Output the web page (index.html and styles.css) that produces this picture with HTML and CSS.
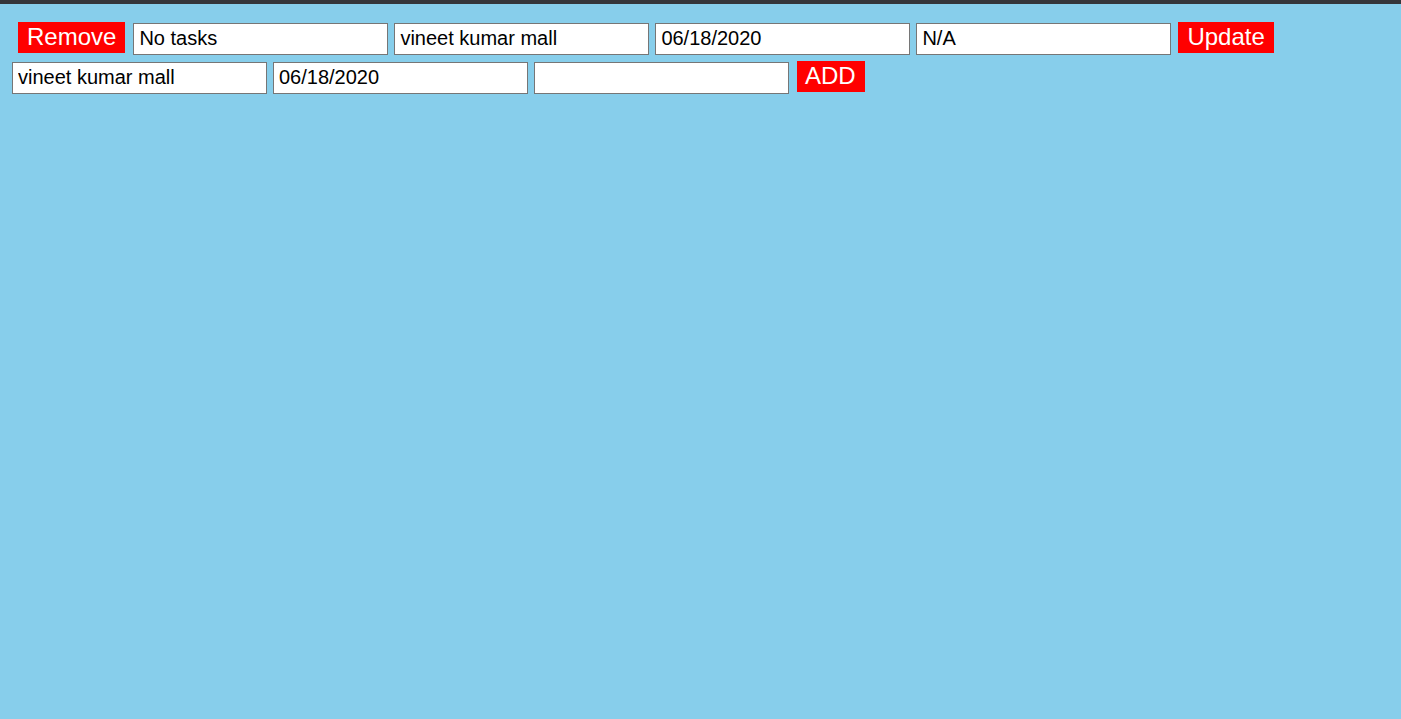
FILE: index.html
```html
<!DOCTYPE html>
<html>
<head>
<meta charset="utf-8">
<link rel="stylesheet" href="styles.css">
</head>
<body>
<div class="topbar"></div>
<div class="row row-task">
  <button class="btn btn-remove">Remove</button>
  <input class="field" type="text" value="No tasks">
  <input class="field" type="text" value="vineet kumar mall">
  <input class="field" type="text" value="06/18/2020">
  <input class="field" type="text" value="N/A">
  <button class="btn btn-update">Update</button>
</div>
<div class="row row-add">
  <input class="field" type="text" value="vineet kumar mall">
  <input class="field" type="text" value="06/18/2020">
  <input class="field" type="text" value="">
  <button class="btn btn-add">ADD</button>
</div>
</body>
</html>
```
FILE: styles.css
```css
html, body {
  margin: 0;
  padding: 0;
  height: 100%;
}
body {
  background: #87ceeb;
  font-family: "Liberation Sans", Arial, sans-serif;
}
.topbar {
  height: 4px;
  background: #35363a;
}
.row {
  display: flex;
  align-items: flex-start;
}
.row-task {
  margin-top: 18px;
  padding-left: 18px;
  height: 33px;
}
.row-add {
  margin-top: 6px;
  padding-left: 12px;
}
.field {
  box-sizing: border-box;
  width: 255px;
  height: 32px;
  margin: 1px 6px 0 0;
  padding: 0 5px 2px 5px;
  border: 1px solid #767676;
  border-radius: 0;
  background: #fff;
  color: #000;
  font-family: "Liberation Sans", Arial, sans-serif;
  font-size: 20px;
  outline: none;
}
.btn {
  box-sizing: border-box;
  height: 31px;
  padding: 0 9px 2px 9px;
  border: none;
  border-radius: 0;
  background: #ff0000;
  color: #fff;
  font-family: "Liberation Sans", Arial, sans-serif;
  font-size: 24px;
  line-height: 29px;
  cursor: pointer;
}
.btn-remove {
  margin-right: 8px;
}
.btn-update {
  margin-left: 1px;
}
.btn-add {
  margin-left: 2px;
  padding: 0 9px 2px 8px;
}
```
